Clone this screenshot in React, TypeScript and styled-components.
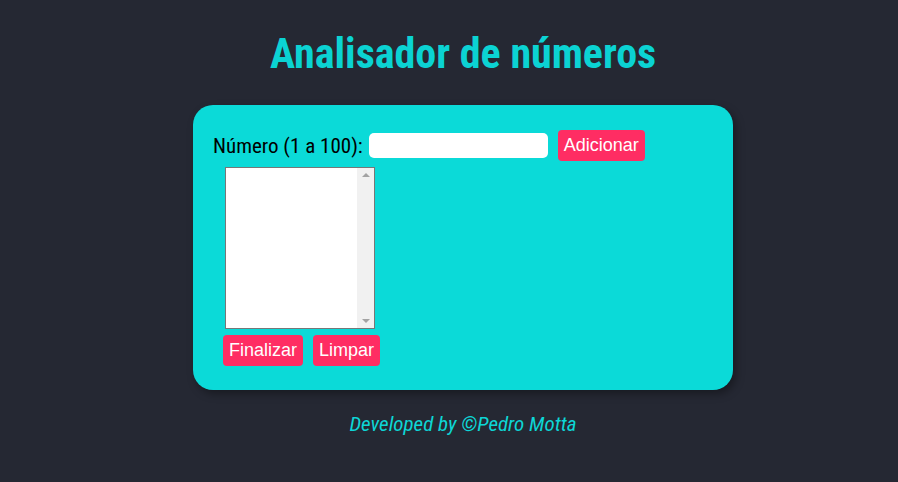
import React from 'react'
import styled, { createGlobalStyle } from 'styled-components'

const GlobalStyle = createGlobalStyle`
  body {
    margin: 0;
    background-color: #252833;
    font-family: Roboto, "Liberation Sans", sans-serif;
    font-stretch: 75%;
  }
`

const Page = styled.div`
  display: flex;
  flex-direction: column;
  align-items: center;
  min-height: 482px;
  padding-left: 28px;
`

const Title = styled.h1`
  margin: 26px 0 0;
  font-size: 42px;
  font-weight: 700;
  color: #0bd3d3;
  line-height: 56px;
`

const Card = styled.main`
  box-sizing: border-box;
  width: 540px;
  height: 285px;
  margin-top: 23px;
  padding: 25px 20px;
  background-color: #0bdad8;
  border-radius: 20px;
  box-shadow: 3px 4px 8px rgba(0, 0, 0, 0.35);
`

const Row = styled.div`
  display: flex;
  align-items: center;
`

const Label = styled.label`
  font-size: 21px;
  color: #000;
`

const NumberInput = styled.input`
  width: 179px;
  height: 25px;
  margin-left: 6px;
  padding: 0;
  border: none;
  border-radius: 5px;
  background: #fff;
`

const Button = styled.button<{ $ml?: number }>`
  height: 31px;
  margin-left: ${p => p.$ml ?? 10}px;
  padding: 0 6px;
  border: none;
  border-radius: 4px;
  background-color: #ff2d63;
  color: #fff;
  font-family: "Liberation Sans", Arial, sans-serif;
  font-size: 18px;
`

const ListWrap = styled.div`
  box-sizing: border-box;
  display: flex;
  width: 150px;
  height: 162px;
  margin: 6px 0 6px 12px;
  border: 1px solid #777;
  background: #fff;
`

const ListBox = styled.select`
  flex: 1;
  min-width: 0;
  border: none;
  outline: none;
  background: #fff;
`

const Scrollbar = styled.div`
  display: flex;
  flex-direction: column;
  justify-content: space-between;
  align-items: center;
  width: 17px;
  padding: 5px 0;
  background: #f1f1f1;
`

const Arrow = styled.span<{ $down?: boolean }>`
  width: 0;
  height: 0;
  border-left: 4px solid transparent;
  border-right: 4px solid transparent;
  ${p => (p.$down ? 'border-top: 4px solid #a3a3a3;' : 'border-bottom: 4px solid #a3a3a3;')}
`

const Footer = styled.footer`
  margin-top: 22px;
  font-size: 21px;
  font-style: italic;
  color: #0dd6d6;
`

export default function App() {
  return (
    <>
      <GlobalStyle />
      <Page>
        <Title>Analisador de números</Title>
        <Card>
          <Row>
            <Label htmlFor="num">Número (1 a 100):</Label>
            <NumberInput id="num" type="number" />
            <Button>Adicionar</Button>
          </Row>
          <ListWrap>
            <ListBox size={10} />
            <Scrollbar>
              <Arrow />
              <Arrow $down />
            </Scrollbar>
          </ListWrap>
          <Row>
            <Button $ml={10}>Finalizar</Button>
            <Button>Limpar</Button>
          </Row>
        </Card>
        <Footer>Developed by ©Pedro Motta</Footer>
      </Page>
    </>
  )
}
